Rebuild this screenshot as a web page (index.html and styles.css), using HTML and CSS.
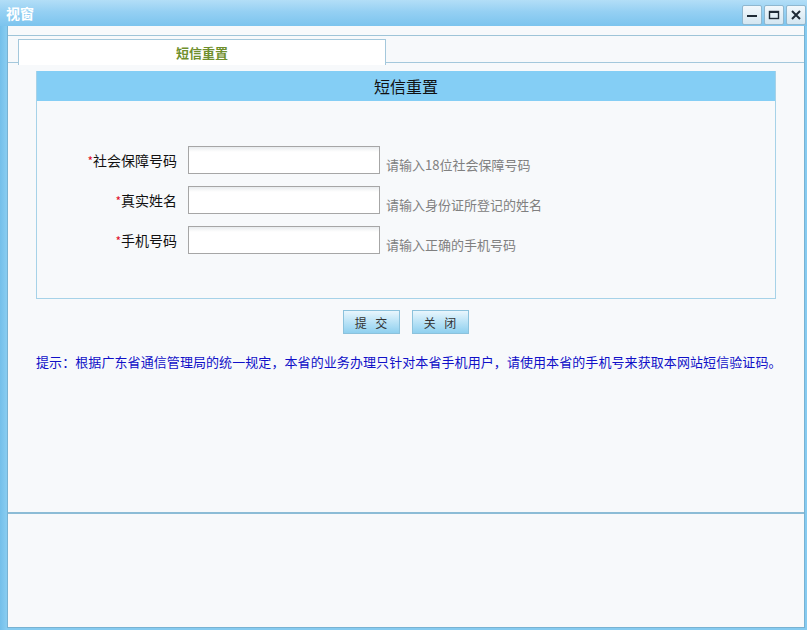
FILE: index.html
```html
<!DOCTYPE html>
<html lang="zh">
<head>
<meta charset="utf-8">
<title>视窗</title>
<link rel="stylesheet" href="styles.css">
</head>
<body>
<div class="window">
  <div class="titlebar">
    <span class="title">视窗</span>
    <div class="controls">
      <span class="ctl"><svg width="14" height="14" viewBox="0 0 14 14"><rect x="2" y="7" width="10" height="2" fill="#1e2a36"/></svg></span>
      <span class="ctl"><svg width="14" height="14" viewBox="0 0 14 14"><rect x="2.5" y="3.5" width="9" height="7" fill="none" stroke="#1e2a36" stroke-width="1.4"/><rect x="2" y="3" width="10" height="2" fill="#1e2a36"/></svg></span>
      <span class="ctl"><svg width="14" height="14" viewBox="0 0 14 14"><path d="M3 3 L11 11 M11 3 L3 11" stroke="#1e2a36" stroke-width="2"/></svg></span>
    </div>
  </div>
  <div class="client">
    <div class="frame">
      <div class="tabbar">
        <div class="tab">短信重置</div>
      </div>
      <div class="content">
        <div class="panel">
          <div class="panel-head">短信重置</div>
          <div class="panel-body">
            <div class="row">
              <label class="lbl"><span class="req">*</span>社会保障号码</label>
              <input class="inp" type="text">
              <span class="hint">请输入18位社会保障号码</span>
            </div>
            <div class="row">
              <label class="lbl"><span class="req">*</span>真实姓名</label>
              <input class="inp" type="text">
              <span class="hint">请输入身份证所登记的姓名</span>
            </div>
            <div class="row">
              <label class="lbl"><span class="req">*</span>手机号码</label>
              <input class="inp" type="text">
              <span class="hint">请输入正确的手机号码</span>
            </div>
          </div>
        </div>
        <div class="actions">
          <button class="btn">提 交</button>
          <button class="btn">关 闭</button>
        </div>
        <p class="tip">提示：根据广东省通信管理局的统一规定，本省的业务办理只针对本省手机用户，请使用本省的手机号来获取本网站短信验证码。</p>
      </div>
    </div>
    <div class="bottom"></div>
  </div>
</div>
</body>
</html>
```

FILE: styles.css
```css
* { box-sizing: border-box; }
html, body { margin: 0; padding: 0; }
body {
  width: 807px;
  height: 630px;
  overflow: hidden;
  font-family: "Noto Sans CJK SC", "Noto Sans", sans-serif;
  background: #7cc4ee;
}
.window {
  width: 807px;
  height: 630px;
  display: flex;
  flex-direction: column;
  background: linear-gradient(to right, #73bfea 0, #86cbf0 6px, #86cbf0 100%);
}
.titlebar {
  height: 26px;
  flex: none;
  display: flex;
  align-items: center;
  justify-content: space-between;
  padding: 0 1px 0 6px;
  background: linear-gradient(to bottom, #b3def7 0%, #95d0f3 45%, #7cc4ee 100%);
}
.title {
  color: #fff;
  font-weight: bold;
  font-size: 14px;
  line-height: 26px;
}
.controls {
  display: flex;
  gap: 2px;
  padding-top: 4px;
}
.ctl {
  width: 20px;
  height: 20px;
  display: flex;
  align-items: center;
  justify-content: center;
  border: 1px solid #8fb7cf;
  border-radius: 2px;
  background: linear-gradient(to bottom, #f2f8fc 0%, #d4e6f1 100%);
}
.client {
  flex: 1;
  margin: 0 2px 2px 7px;
  background: #f7f9fb;
  border: 1px solid #78b2d2;
  border-top: none;
  display: flex;
  flex-direction: column;
  padding-top: 9px;
}
.frame {
  height: 479px;
  border-top: 1px solid #9ec4d8;
  border-bottom: 2px solid #8cbcd6;
  display: flex;
  flex-direction: column;
}
.tabbar {
  height: 27px;
  border-bottom: 1px solid #a4c8dc;
  padding: 3px 0 0 10px;
  display: flex;
}
.tab {
  width: 368px;
  height: 26px;
  background: #fff;
  border: 1px solid #a4c8dc;
  border-bottom: none;
  text-align: center;
  color: #6f8f2c;
  font-weight: bold;
  font-size: 13px;
  line-height: 26px;
  margin-bottom: -3px;
}
.content {
  padding: 8px 30px 0 28px;
}
.panel {
  width: 740px;
  height: 228px;
  border: 1px solid #a6d2e8;
  border-top: none;
  background: #f7f9fb;
}
.panel-head {
  height: 30px;
  background: #84cef5;
  text-align: center;
  font-size: 16px;
  line-height: 30px;
  color: #111;
}
.panel-body {
  padding: 45px 0 0 0;
  display: flex;
  flex-direction: column;
  gap: 12px;
}
.row {
  display: flex;
  align-items: center;
  height: 28px;
}
.lbl {
  width: 140px;
  text-align: right;
  font-size: 14px;
  color: #111;
}
.req {
  color: #e0102a;
  font-size: 12px;
}
.inp {
  margin-left: 11px;
  width: 192px;
  height: 28px;
  border: 1px solid #a6a6a6;
  background: linear-gradient(to bottom, #e9ecee 0, #fff 5px, #fff 100%);
  padding: 0 4px;
  outline: none;
}
.hint {
  margin-left: 6px;
  margin-top: 8px;
  font-size: 13px;
  color: #808080;
}
.actions {
  display: flex;
  justify-content: center;
  gap: 12px;
  padding: 11px 0 0 1px;
}
.btn {
  width: 57px;
  height: 24px;
  border: 1px solid #8cc2dc;
  background: linear-gradient(to bottom, #e9f6fd 0%, #bfe5f7 45%, #8fd0ef 100%);
  font-family: "Noto Sans CJK SC", sans-serif;
  font-size: 12px;
  color: #333;
  padding: 0;
  letter-spacing: 3px;
  text-indent: 3px;
}
.tip {
  margin: 18px 0 0 0;
  font-size: 13px;
  color: #1010c8;
  white-space: nowrap;
  letter-spacing: 0.08px;
}
.bottom {
  flex: 1;
}
```
